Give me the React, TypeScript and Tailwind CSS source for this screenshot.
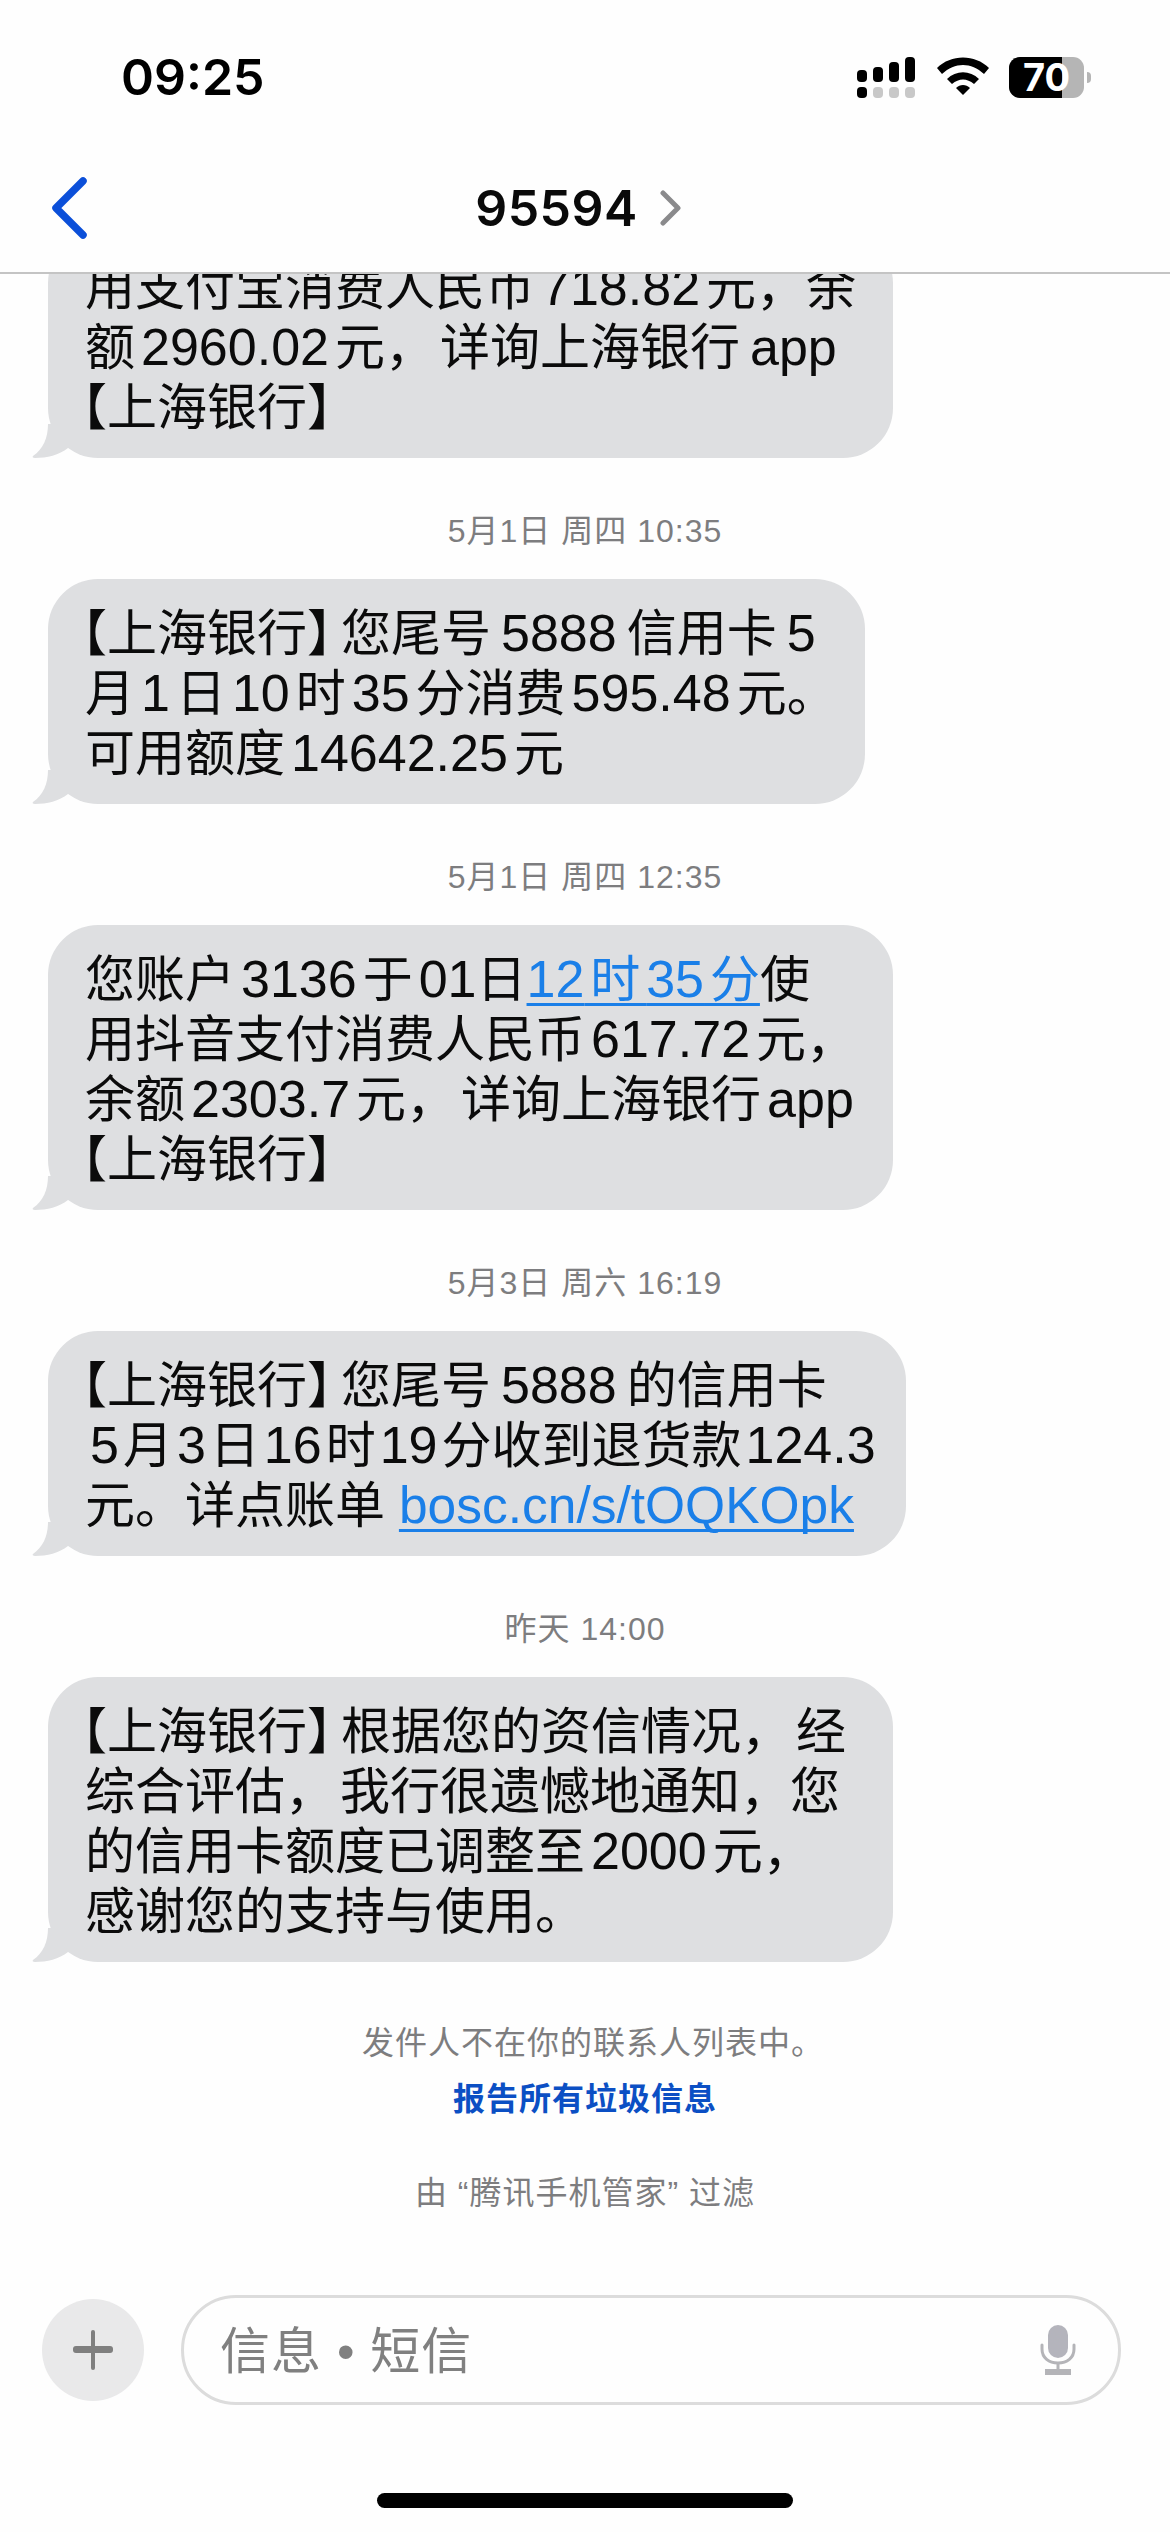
const linkClass = "text-[#1a7fe8] underline decoration-[3px] underline-offset-[6px] [text-decoration-skip-ink:none]";

const Bank = () => <span className="ml-[-3px] mr-[9px] [font-feature-settings:'halt']">【上海银行】</span>;

// latin runs sit a bit larger than the CJK around them, with a small gap
const L = ({ gap = "px-[6px]", children }: { gap?: string; children: React.ReactNode }) => (
  <span className={`text-[52px] leading-none ${gap}`}>{children}</span>
);

// mid-line commas carry a little more room after them than the font gives
const Comma = () => <span className="mr-[5px]">，</span>;

const Tail = () => (
  <svg className="absolute left-[-16px] bottom-0" width="40" height="34" viewBox="0 0 40 34">
    <path d="M16 0 C16 14 11 25 1 32 C0 33 1 34 3 34 C15 34 27 31 36 24 L36 0 Z" fill="#dedfe1" />
  </svg>
);

const Bubble = ({ width, className = "", children }: { width: string; className?: string; children: React.ReactNode }) => (
  <div className={`relative ml-[48px] rounded-[50px] bg-[#dedfe1] pl-[37px] pt-[25px] pb-[20px] ${width} ${className}`}>
    <Tail />
    <div className="relative text-[50px] leading-[60px] text-[#0b0b0b] whitespace-nowrap">{children}</div>
  </div>
);

const Time = ({ children }: { children: React.ReactNode }) => (
  <div className="mt-[53px] mb-[28px] text-center text-[32px] leading-[40px] tracking-[1px] text-[#7d7d7f]">{children}</div>
);

const Signal = () => (
  <svg width="60" height="42" viewBox="0 0 60 42">
    <rect x="0" y="13" width="10" height="12" rx="4" fill="#000" />
    <rect x="16" y="10" width="10" height="15" rx="4" fill="#000" />
    <rect x="32" y="5" width="10" height="20" rx="4" fill="#000" />
    <rect x="48" y="0" width="10" height="25" rx="4" fill="#000" />
    <rect x="0" y="30" width="10" height="11" rx="4" fill="#000" />
    <rect x="16" y="30" width="10" height="11" rx="4" fill="#c8c8c8" />
    <rect x="32" y="30" width="10" height="11" rx="4" fill="#c8c8c8" />
    <rect x="48" y="30" width="10" height="11" rx="4" fill="#c8c8c8" />
  </svg>
);

const Wifi = () => (
  <svg width="52" height="38" viewBox="0 0 52 38">
    <path d="M0 11 C14 -3 38 -3 52 11 L47 17 C34 5 18 5 5 17 Z" fill="#000" />
    <path d="M10 22 C19 13 33 13 42 22 L37 27 C30 21 22 21 15 27 Z" fill="#000" />
    <path d="M19 31 C23 27 29 27 33 31 L26 38 Z" fill="#000" />
  </svg>
);

const Battery = () => (
  <div className="flex items-center">
    <div className="relative flex h-[41px] w-[75px] rounded-[11px] bg-[#b5b5b5]">
      <div className="h-full w-[53px] rounded-l-[11px] bg-black" />
      <span className="absolute left-[14px] top-[-2px] font-['Inter'] text-[38px] leading-[45px] font-bold text-white">70</span>
    </div>
    <div className="ml-[3px] h-[11px] w-[4px] rounded-r-full bg-[#b5b5b5]" />
  </div>
);

const Mic = () => (
  <svg width="36" height="50" viewBox="0 0 36 50">
    <rect x="8" y="0" width="20" height="33" rx="10" fill="#b4b4bc" />
    <path d="M2 20 V24 C2 33 9 38 18 38 C27 38 34 33 34 24 V20" fill="none" stroke="#b4b4b8" strokeWidth="3" strokeLinecap="round" />
    <rect x="16.5" y="38" width="3" height="8" fill="#b4b4b8" />
    <rect x="5" y="44" width="26" height="6" fill="#b4b4b8" />
  </svg>
);

export default function App() {
  return (
    <div className="flex h-[2532px] w-[1170px] flex-col overflow-hidden bg-[#fefefe] font-['Liberation_Sans','Noto_Sans_CJK_SC',sans-serif]">
      <header className="relative z-10 h-[274px] shrink-0 border-b-2 border-[#c4c4c4] bg-[#fefefe]">
        <div className="flex h-[177px] items-start justify-between pt-[57px] pl-[121px] pr-[79px]">
          <span className="font-['Inter'] text-[50px] leading-[41px] font-semibold text-black">09:25</span>
          <div className="flex items-start gap-[20px]">
            <Signal />
            <Wifi />
            <Battery />
          </div>
        </div>
        <div className="relative flex h-[62px] items-center justify-center">
          <svg className="absolute left-[51px] top-0" width="36" height="62" viewBox="0 0 36 62">
            <path d="M32 4 L5 31 L32 58" fill="none" stroke="#0b4fd9" strokeWidth="7.5" strokeLinecap="round" strokeLinejoin="round" />
          </svg>
          <span className="font-['Inter'] text-[50px] leading-[62px] font-semibold tracking-[0.5px] text-[#0a0a0a]">95594</span>
          <svg className="ml-[22px] mr-[13px]" width="22" height="36" viewBox="0 0 22 36">
            <path d="M3 3 L18 18 L3 33" fill="none" stroke="#8a8a8c" strokeWidth="5" strokeLinecap="round" strokeLinejoin="round" />
          </svg>
        </div>
      </header>

      <main className="min-h-0 flex-1 overflow-hidden">
        <Bubble width="w-[845px]" className="mt-[-41px]">
          <div>用支付宝消费人民币<L>718.82</L>元，余</div>
          <div>额<L>2960.02</L>元<Comma />详询上海银行<L gap="px-[10px]">app</L></div>
          <div><Bank /></div>
        </Bubble>

        <Time>5月1日 周四 10:35</Time>
        <Bubble width="w-[817px]">
          <div><Bank />您尾号<L gap="px-[10px]">5888</L>信用卡<L gap="px-[10px]">5</L></div>
          <div>月<L>1</L>日<L>10</L>时<L>35</L>分消费<L>595.48</L>元。</div>
          <div>可用额度<L>14642.25</L>元</div>
        </Bubble>

        <Time>5月1日 周四 12:35</Time>
        <Bubble width="w-[845px]">
          <div>
            您账户<L>3136</L>于<L gap="pl-[6px]">01</L>日
            <span className={`${linkClass} [word-spacing:-8px]`}><L gap="">12</L> 时 <L gap="">35</L> 分</span>使
          </div>
          <div>用抖音支付消费人民币<L>617.72</L>元，</div>
          <div>余额<L>2303.7</L>元<Comma />详询上海银行<L>app</L></div>
          <div><Bank /></div>
        </Bubble>

        <Time>5月3日 周六 16:19</Time>
        <Bubble width="w-[858px]">
          <div><Bank />您尾号<L gap="px-[10px]">5888</L>的信用卡</div>
          <div className="pl-[1px]">
            <L gap="px-[4px]">5</L>月<L gap="px-[4px]">3</L>日<L gap="px-[4px]">16</L>时<L gap="px-[4px]">19</L>分收到退货款<L gap="px-[4px]">124.3</L>
          </div>
          <div>
            元。详点账单 <span className={`${linkClass} text-[51.5px] leading-none`}>bosc.cn/s/tOQKOpk</span>
          </div>
        </Bubble>

        <Time>昨天 14:00</Time>
        <Bubble width="w-[845px]">
          <div><Bank />根据您的资信情况<Comma />经</div>
          <div>综合评估<Comma />我行很遗憾地通知，您</div>
          <div>的信用卡额度已调整至<L>2000</L>元，</div>
          <div>感谢您的支持与使用。</div>
        </Bubble>

        <div className="mt-[61px] pl-[16px] text-center text-[32px] leading-[40px] tracking-[1px] text-[#7d7d7f]">发件人不在你的联系人列表中。</div>
        <div className="mt-[16px] text-center text-[32px] leading-[40px] font-bold tracking-[1px] text-[#0b4fc4]">报告所有垃圾信息</div>
        <div className="mt-[54px] text-center text-[32px] leading-[40px] tracking-[1px] text-[#7d7d7f]">由 “腾讯手机管家” 过滤</div>
      </main>

      <div className="flex shrink-0 items-center pl-[42px] pr-[49px]">
        <div className="flex h-[102px] w-[102px] items-center justify-center rounded-full bg-[#e9e9ea]">
          <svg width="40" height="40" viewBox="0 0 40 40">
            <rect x="0" y="16" width="40" height="7" rx="3" fill="#7f7f7f" />
            <rect x="18" y="0" width="4" height="40" rx="2" fill="#7f7f7f" />
          </svg>
        </div>
        <div className="ml-[37px] flex h-[110px] flex-1 items-center justify-between rounded-[55px] border-[3px] border-[#dcdcdc] pl-[36px] pr-[42px]">
          <span className="pt-[3px] text-[50px] leading-[60px] tracking-[1px] text-[#808080]">信息 • 短信</span>
          <Mic />
        </div>
      </div>

      <div className="mt-[88px] mb-[24px] h-[15px] w-[416px] shrink-0 self-center rounded-full bg-black" />
    </div>
  );
}
